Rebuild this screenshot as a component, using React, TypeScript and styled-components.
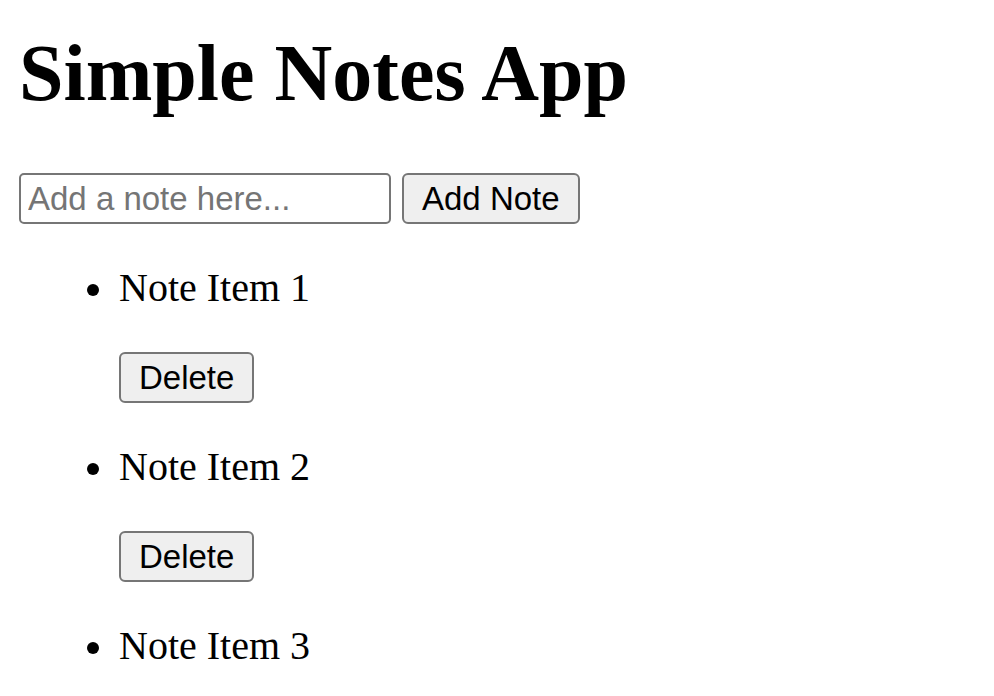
import React, { useState } from 'react';
import styled, { createGlobalStyle } from 'styled-components';

const GlobalStyle = createGlobalStyle`
  html, body {
    margin: 0;
    padding: 0;
    background: #ffffff;
  }
  body {
    font-family: "Liberation Serif", "Times New Roman", serif;
    color: #000000;
  }
`;

const Page = styled.div`
  padding: 0 19px;
  display: flex;
  flex-direction: column;
`;

const Title = styled.h1`
  margin: 25px 0 0 0;
  font-family: "Liberation Serif", "Times New Roman", serif;
  font-size: 80px;
  font-weight: 700;
  line-height: 96px;
  color: #000;
`;

const AddRow = styled.div`
  margin-top: 52px;
  display: flex;
  align-items: center;
  gap: 11px;
`;

const NoteInput = styled.input`
  box-sizing: border-box;
  width: 372px;
  height: 51px;
  padding: 0 7px;
  border: 2px solid #767676;
  border-radius: 5px;
  font-family: "Liberation Sans", Arial, sans-serif;
  font-size: 33px;
  color: #000;
  background: #fff;
  outline: none;

  &::placeholder {
    color: #757575;
  }
`;

const PlainButton = styled.button`
  box-sizing: border-box;
  height: 51px;
  padding: 0 18px;
  border: 2px solid #767676;
  border-radius: 6px;
  background: #efefef;
  font-family: "Liberation Sans", Arial, sans-serif;
  font-size: 33px;
  color: #000;
  cursor: pointer;
`;

const NoteList = styled.ul`
  margin: 40px 0 0 0;
  padding: 0 0 0 100px;
  list-style: none;
  display: flex;
  flex-direction: column;
  gap: 40px;
`;

const NoteItem = styled.li`
  position: relative;

  &::before {
    content: '';
    position: absolute;
    left: -32px;
    top: 20px;
    width: 12px;
    height: 12px;
    border-radius: 50%;
    background: #000;
  }
`;

const NoteText = styled.div`
  font-family: "Liberation Serif", "Times New Roman", serif;
  font-size: 40px;
  line-height: 48px;
`;

const DeleteButton = styled(PlainButton)`
  display: block;
  margin-top: 40px;
`;

const App: React.FC = () => {
  const [notes, setNotes] = useState<string[]>(['Note Item 1', 'Note Item 2', 'Note Item 3']);
  const [draft, setDraft] = useState('');

  const addNote = () => {
    if (!draft.trim()) return;
    setNotes([...notes, draft.trim()]);
    setDraft('');
  };

  return (
    <>
      <GlobalStyle />
      <Page>
        <Title>Simple Notes App</Title>
        <AddRow>
          <NoteInput
            placeholder="Add a note here..."
            value={draft}
            onChange={(e) => setDraft(e.target.value)}
          />
          <PlainButton onClick={addNote}>Add Note</PlainButton>
        </AddRow>
        <NoteList>
          {notes.map((note, index) => (
            <NoteItem key={index}>
              <NoteText>{note}</NoteText>
              <DeleteButton onClick={() => setNotes(notes.filter((_, i) => i !== index))}>
                Delete
              </DeleteButton>
            </NoteItem>
          ))}
        </NoteList>
      </Page>
    </>
  );
};

export default App;
